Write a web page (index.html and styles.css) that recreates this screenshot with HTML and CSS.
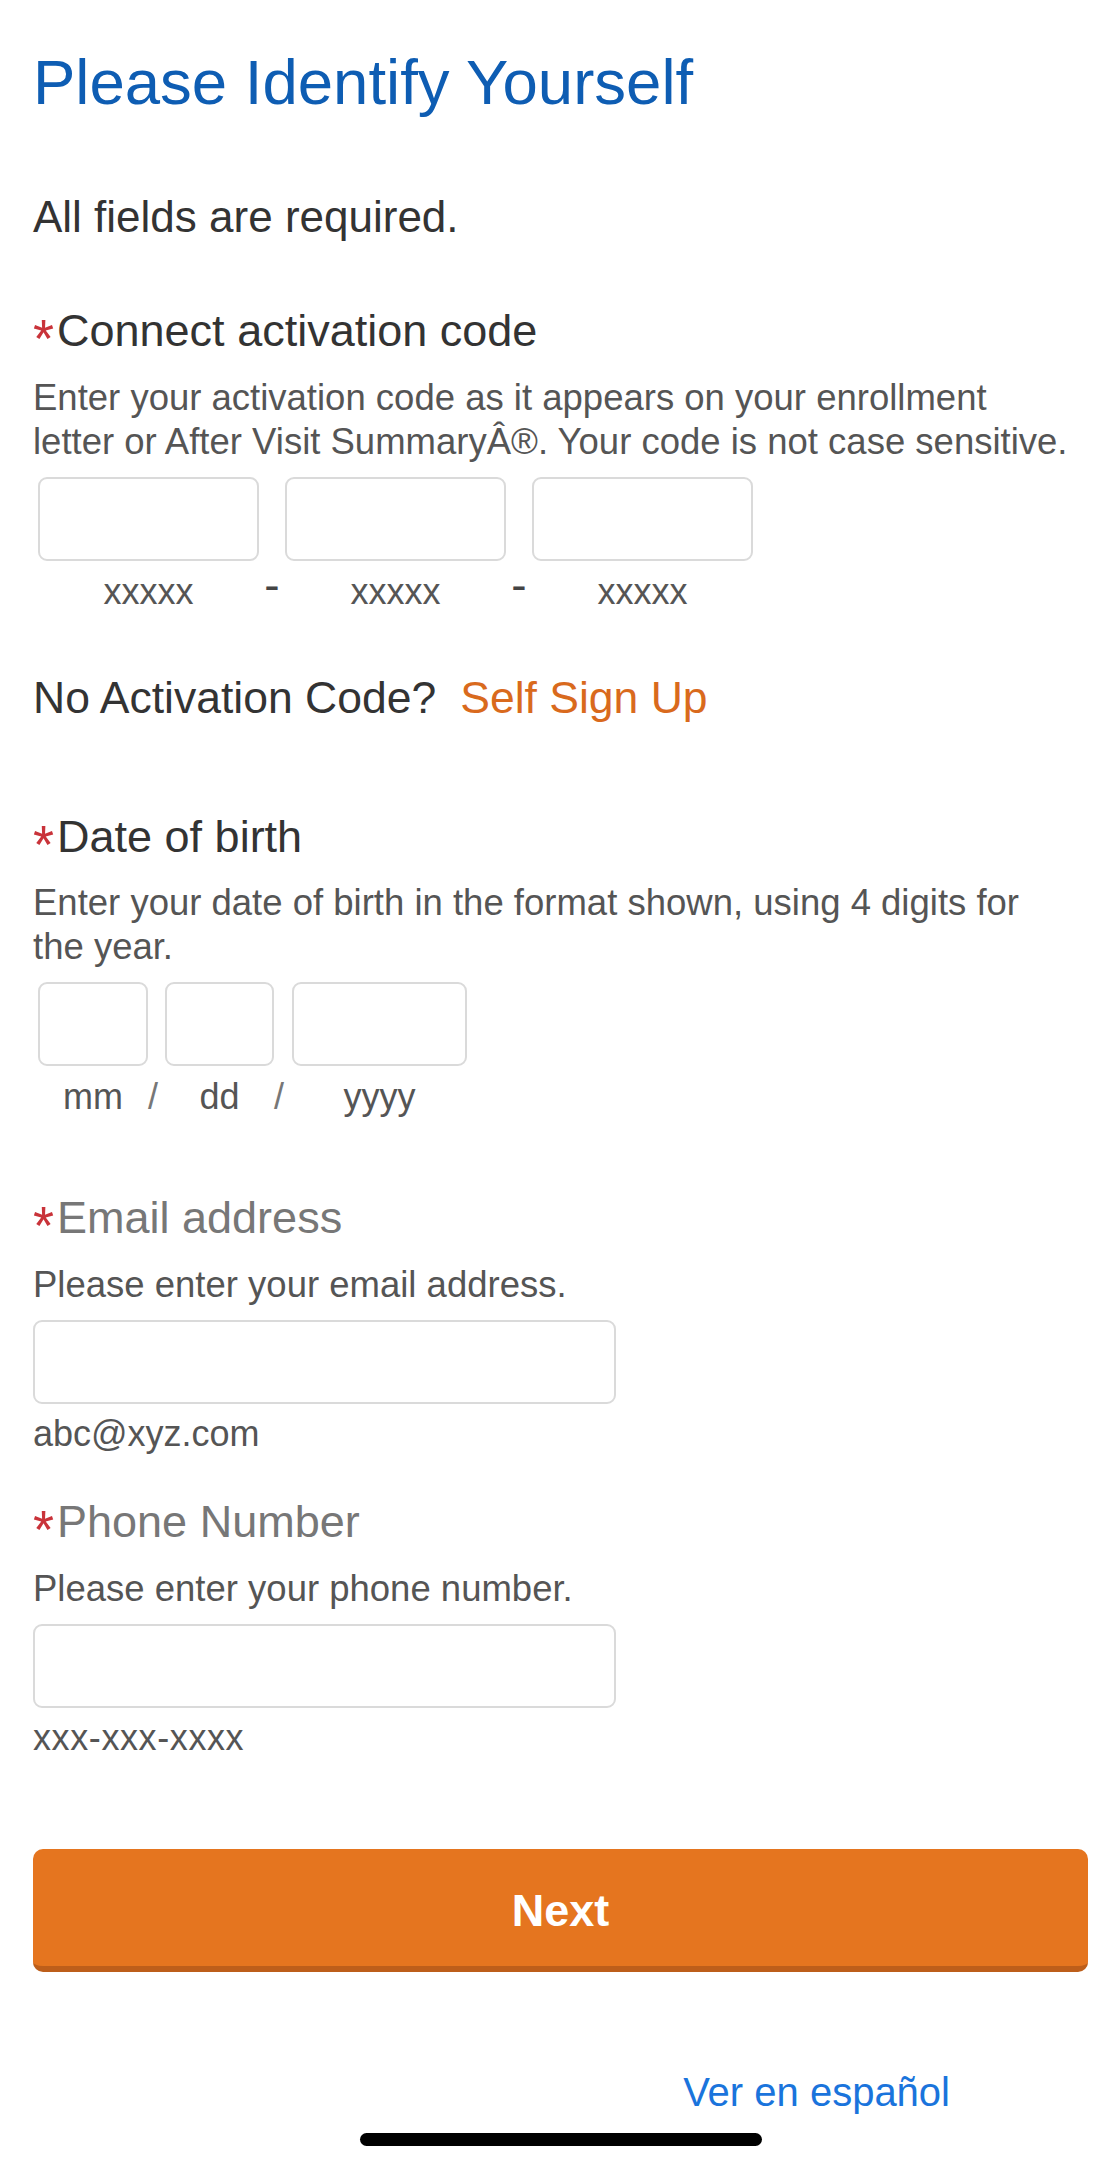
FILE: index.html
```html
<!DOCTYPE html>
<html lang="en">
<head>
<meta charset="utf-8">
<title>Please Identify Yourself</title>
<link rel="stylesheet" href="styles.css">
</head>
<body>
<main class="page">
  <h1 class="title">Please Identify Yourself</h1>
  <p class="intro">All fields are required.</p>

  <section class="field">
    <div class="label"><span class="req">*</span>Connect activation code</div>
    <p class="help">Enter your activation code as it appears on your enrollment letter or After Visit SummaryÂ®. Your code is not case sensitive.</p>
    <div class="seg seg-code">
      <input class="box" type="text" aria-label="Code part 1"><span></span>
      <input class="box" type="text" aria-label="Code part 2"><span></span>
      <input class="box" type="text" aria-label="Code part 3">
      <span class="hint">xxxxx</span><span class="dash">-</span>
      <span class="hint">xxxxx</span><span class="dash">-</span>
      <span class="hint">xxxxx</span>
    </div>
  </section>

  <p class="noact">No Activation Code?<a class="signup" href="#">Self Sign Up</a></p>

  <section class="field field-dob">
    <div class="label"><span class="req">*</span>Date of birth</div>
    <p class="help">Enter your date of birth in the format shown, using 4 digits for the year.</p>
    <div class="seg seg-dob">
      <input class="box" type="text" aria-label="Month"><span></span>
      <input class="box" type="text" aria-label="Day"><span></span>
      <input class="box" type="text" aria-label="Year">
      <span class="hint">mm</span><span class="slash">/</span>
      <span class="hint">dd</span><span class="slash">/</span>
      <span class="hint">yyyy</span>
    </div>
  </section>

  <section class="field field-email">
    <div class="label label-muted"><span class="req">*</span>Email address</div>
    <p class="help">Please enter your email address.</p>
    <input class="box wide" type="email" aria-label="Email address">
    <p class="hint hint-left">abc@xyz.com</p>
  </section>

  <section class="field field-phone">
    <div class="label label-muted"><span class="req">*</span>Phone Number</div>
    <p class="help">Please enter your phone number.</p>
    <input class="box wide" type="tel" aria-label="Phone Number">
    <p class="hint hint-left hint-phone">xxx-xxx-xxxx</p>
  </section>

  <button class="next" type="button">Next</button>

  <div class="footer"><a class="lang" href="#">Ver en español</a></div>
  <div class="home-bar"></div>
</main>
</body>
</html>
```

FILE: styles.css
```css
* {
  box-sizing: border-box;
}

html, body {
  margin: 0;
  padding: 0;
  background: #ffffff;
}

body {
  font-family: "Liberation Sans", Arial, sans-serif;
  color: #333333;
}

.page {
  width: 1120px;
  padding: 44px 32px 21px 33px;
}

.title {
  margin: 0;
  font-size: 63.5px;
  line-height: 76px;
  font-weight: normal;
  color: #0e5db3;
}

.intro {
  margin: 70px 0 0;
  font-size: 44px;
  line-height: 53px;
  color: #333333;
}

.field {
  margin-top: 61px;
}

.label {
  font-size: 45px;
  line-height: 54px;
  color: #333333;
}

.label-muted {
  color: #777777;
}

.req {
  color: #c9333a;
  font-size: 54px;
  line-height: 0;
  vertical-align: -11px;
  margin-right: 3px;
}

.help {
  margin: 17.5px 0 0;
  max-width: 1043px;
  font-size: 36.5px;
  line-height: 44px;
  color: #555555;
}

.box {
  display: block;
  height: 84px;
  margin: 0;
  border: 2px solid #dadada;
  border-radius: 9px;
  background: #ffffff;
  font: inherit;
  outline: none;
}

.seg {
  display: grid;
  grid-template-rows: 84px 44px;
  row-gap: 9px;
  margin: 13px 0 0 5px;
}

.seg-code {
  grid-template-columns: 221px 26px 221px 26px 221px;
}

.seg-dob {
  grid-template-columns: 110px 17px 109px 18px 175px;
}

.seg .box {
  width: 100%;
}

.hint {
  font-size: 36px;
  line-height: 44px;
  color: #555555;
  text-align: center;
}

.dash {
  align-self: start;
  justify-self: center;
  font-size: 46px;
  line-height: 31px;
  color: #444444;
}

.slash {
  justify-self: start;
  font-size: 36px;
  line-height: 44px;
  color: #777777;
}

.noact {
  margin: 57px 0 0;
  font-size: 44.5px;
  line-height: 53px;
  color: #333333;
}

.signup {
  margin-left: 24px;
  color: #d96a1d;
  text-decoration: none;
}

.field-dob {
  margin-top: 86px;
}

.field-email {
  margin-top: 72px;
}

.field-phone {
  margin-top: 39px;
}

.wide {
  width: 583px;
  margin-top: 13.5px;
}

.hint-left {
  margin: 8px 0 0;
  text-align: left;
}

.hint-phone {
  letter-spacing: 0.6px;
}

.next {
  display: block;
  width: 100%;
  height: 123px;
  margin: 88.5px 0 0;
  padding: 6px 0 0;
  border: none;
  border-bottom: 6px solid #bd5e1a;
  border-radius: 10px;
  background: #e5751f;
  color: #ffffff;
  font-family: "Liberation Sans", Arial, sans-serif;
  font-size: 45px;
  font-weight: bold;
  line-height: 111px;
}

.footer {
  margin-top: 96px;
  display: flex;
  justify-content: flex-end;
  padding-right: 138px;
}

.lang {
  font-size: 40px;
  line-height: 48px;
  color: #1a74dc;
  text-decoration: none;
}

.home-bar {
  width: 402px;
  height: 13px;
  margin: 17px auto 0;
  border-radius: 7px;
  background: #000000;
}
```
